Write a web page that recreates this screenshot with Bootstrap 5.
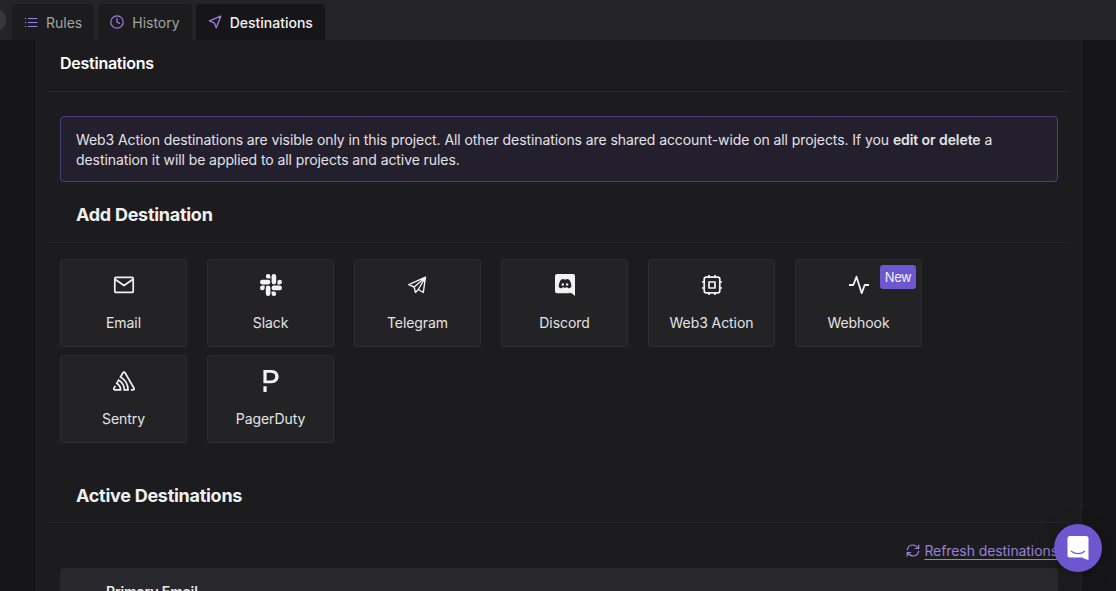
<!DOCTYPE html>
<html lang="en" data-bs-theme="dark">
<head>
<meta charset="utf-8">
<meta name="viewport" content="width=device-width, initial-scale=1">
<title>Destinations</title>
<link href="https://cdn.jsdelivr.net/npm/bootstrap@5.3.0/dist/css/bootstrap.min.css" rel="stylesheet">
<style>
body{font-family:Inter,sans-serif;font-size:14px;line-height:20px;letter-spacing:-.08px;background:#161618;color:#e9e9ec;height:591px;overflow:hidden}
svg{display:block;flex:none}
.topbar{height:40px;background:#242426;padding:4px 0 0 12px;gap:4px;position:relative;overflow:hidden}
.scroll-knob{position:absolute;left:-18px;top:8px;width:24px;height:24px;border-radius:50%;background:#38383b}
.topbar .nav-link{height:36px;padding:0 12px;border-radius:4px 4px 0 0;background:#1c1c1e;color:#a3a3a6;display:flex;align-items:center;line-height:20px;padding-top:1px;letter-spacing:0}
.topbar .nav-link.active{background:#161618;color:#f1f1f3;font-weight:500}
.topbar svg{width:14px;height:14px;color:#9580dc;margin-right:8px;margin-top:-2px}
.panel{width:1046px;height:551px;margin-left:36px;border:solid #262629;border-width:0 1px;background:#1c1c1e;padding:0 11px;overflow:hidden}
.panel-title{height:52px;padding:13px 12px 0;border-bottom:1px solid #28282b;font-size:16px;line-height:20px;font-weight:600;letter-spacing:-.25px}
.notice{margin:24px 12px 0;height:66px;padding:13px 15px 0;border:1px solid #4b3f7f;border-radius:4px;background:#231f2c;color:#e3e2e8}
.section-title{font-size:18px;line-height:24px;font-weight:700;letter-spacing:-.27px;padding-left:28px;border-bottom:1px solid #252528;color:#f0f0f1}
.add-title{height:61px;padding-top:21px}
.active-title{height:60px;padding-top:21px;margin-top:20px}
.tiles{display:grid;grid-template-columns:repeat(6,127px);column-gap:20px;row-gap:8px;padding:16px 12px 0}
.tile{height:88px;border:1px solid #2d2d30;border-radius:3px;background:#232325;color:#e4e4e6;padding:14px 0 0;position:relative;font-size:14px;line-height:20px}
.tile svg{width:22px;height:22px;margin:0 auto 17px;color:#f2f2f3}
.new-tag{position:absolute;right:5px;top:5px;width:36px;height:24px;border-radius:3px;background:#6e56cf;color:#f3f0ff;font-size:13px;line-height:25px;font-weight:400;letter-spacing:-.5px;padding:0}
.refresh{height:45px;padding:18px 12px 0;color:#9580dc}
.refresh a{color:#9580dc;text-decoration:underline;text-underline-offset:3px}
.dest-row{margin:0 12px;height:60px;border-radius:4px 4px 0 0;background:#29282d;padding:14px 46px;font-weight:600;letter-spacing:-.1px}
.chat-btn{position:absolute;left:1054px;top:524px;width:48px;height:48px;border-radius:50%;background:#6e56cf;box-shadow:0 1px 6px #0002,0 2px 20px #0002;padding:0}
</style>
</head>
<body>
<nav class="nav topbar flex-nowrap">
  <span class="scroll-knob"></span>
  <a class="nav-link" href="#"><svg viewBox="0 0 14 14" fill="none" stroke="currentColor" stroke-width="1.1"><path d="M4 3.500h9.500M4 7.500h9.500M4 11.500h9.500M.8 3.500h1.400M.8 7.500h1.400M.8 11.500h1.400"/></svg>Rules</a>
  <a class="nav-link" href="#"><svg viewBox="0 0 14 14" fill="none" stroke="currentColor" stroke-width="1.25" stroke-linecap="round" stroke-linejoin="round"><circle cx="7" cy="7" r="6.2"/><path d="M7 3.4V7l2.500 1.400"/></svg>History</a>
  <a class="nav-link active" href="#"><svg viewBox="0 0 14 14" fill="none" stroke="currentColor" stroke-width="1.35" stroke-linejoin="round"><path d="M12.800 1.200 1.400 5.800l4.800 2 2 4.900z"/></svg>Destinations</a>
</nav>
<main class="panel">
  <h1 class="panel-title m-0">Destinations</h1>
  <div class="notice">Web3 Action destinations are visible only in this project. All other destinations are shared account-wide on all projects. If you <b class="fw-semibold">edit or delete</b> a destination it will be applied to all projects and active rules.</div>
  <h2 class="section-title add-title mb-0">Add Destination</h2>
  <div class="tiles text-center">
    <div class="tile"><svg viewBox="0 0 22 22" fill="none" stroke="currentColor" stroke-width="1.7" stroke-linejoin="round"><rect x="1.8" y="3.4" width="18.4" height="15" rx="1"/><path d="m2 5.2 9 6.300 9-6.300"/></svg>Email</div>
    <div class="tile"><svg viewBox="0 0 24 24" fill="currentColor"><path d="M5.042 15.165a2.528 2.528 0 0 1-2.52 2.523A2.528 2.528 0 0 1 0 15.165a2.527 2.527 0 0 1 2.522-2.52h2.52zM6.313 15.165a2.527 2.527 0 0 1 2.521-2.52 2.527 2.527 0 0 1 2.521 2.52v6.313A2.528 2.528 0 0 1 8.834 24a2.528 2.528 0 0 1-2.521-2.522zM8.834 5.042a2.528 2.528 0 0 1-2.521-2.52A2.528 2.528 0 0 1 8.834 0a2.528 2.528 0 0 1 2.521 2.522v2.52zM8.834 6.313a2.528 2.528 0 0 1 2.521 2.521 2.528 2.528 0 0 1-2.521 2.521H2.522A2.528 2.528 0 0 1 0 8.834a2.528 2.528 0 0 1 2.522-2.521zM18.956 8.834a2.528 2.528 0 0 1 2.522-2.521A2.528 2.528 0 0 1 24 8.834a2.528 2.528 0 0 1-2.522 2.521h-2.522zM17.688 8.834a2.528 2.528 0 0 1-2.523 2.521 2.527 2.527 0 0 1-2.52-2.521V2.522A2.527 2.527 0 0 1 15.165 0a2.528 2.528 0 0 1 2.523 2.522zM15.165 18.956a2.528 2.528 0 0 1 2.523 2.522A2.528 2.528 0 0 1 15.165 24a2.527 2.527 0 0 1-2.52-2.522v-2.522zM15.165 17.688a2.527 2.527 0 0 1-2.52-2.523 2.526 2.526 0 0 1 2.52-2.52h6.313A2.527 2.527 0 0 1 24 15.165a2.528 2.528 0 0 1-2.522 2.523z"/></svg>Slack</div>
    <div class="tile"><svg viewBox="0 0 22 22" fill="none" stroke="currentColor" stroke-width="1.4" stroke-linejoin="round"><path d="M18.500 3.200 1.800 10.600l5.400 2.400 1.200 5.400 2.900-2.900 5 3zM18.500 3.200 7.200 13M18.500 3.200l-7.200 12.300"/></svg>Telegram</div>
    <div class="tile"><svg viewBox="0 0 22 22"><path fill="currentColor" d="M3 0h15.600A2.200 2.200 0 0 1 21 2.300V22l-3.200-2.800H3a2 2 0 0 1-2-2V2a2 2 0 0 1 2-2z"/><path fill="#232325" d="m15.100 19.800-.6-1.600 2.500 2zM6.700 6c1.200-.8 2.400-1 2.800-.9l.3.5q1.300-.2 2.500 0l.3-.5c.6-.1 1.900.2 2.900.9 1.500 2.400 2 5 1.800 7-1 1-2.300 1.300-3.100 1.300l-.8-1.100q-2.400.9-4.800 0l-.8 1.100c-1 0-2.300-.4-3-1.300-.2-2.200.5-5 1.900-7z"/><ellipse cx="8.800" cy="10.500" rx="1.200" ry="1.300" fill="currentColor"/><ellipse cx="13.100" cy="10.500" rx="1.200" ry="1.300" fill="currentColor"/></svg>Discord</div>
    <div class="tile"><svg viewBox="0 0 22 22" fill="none" stroke="currentColor" stroke-width="1.7" stroke-linejoin="round"><rect x="3.200" y="3.200" width="15.600" height="15.600" rx="2"/><rect x="8" y="8" width="6" height="6"/><path d="M8 1v2.200M14 1v2.200M8 18.800V21M14 18.800V21M1 8h2.200M1 14h2.200M18.800 8H21M18.800 14H21"/></svg>Web3 Action</div>
    <div class="tile"><svg viewBox="0 0 22 22" fill="none" stroke="currentColor" stroke-width="1.8" stroke-linejoin="round"><path d="M1 11h4.300L8.500 2.800l5.200 16.400 3-8.200H21"/></svg>Webhook<span class="new-tag badge">New</span></div>
    <div class="tile"><svg viewBox="0 0 24 24" fill="currentColor"><path d="M13.91 2.505c-.873-1.448-2.972-1.448-3.844 0L6.904 7.92a15.478 15.478 0 0 1 8.53 12.811h-2.221A13.301 13.301 0 0 0 5.784 9.814l-2.926 5.06a7.65 7.65 0 0 1 4.435 5.848H2.194a.365.365 0 0 1-.298-.534l1.413-2.402a5.16 5.16 0 0 0-1.614-.913L.296 19.275a2.182 2.182 0 0 0 .812 2.999 2.24 2.24 0 0 0 1.086.288h6.983a9.322 9.322 0 0 0-3.845-8.318l1.11-1.922a11.47 11.47 0 0 1 4.95 10.24h5.915a17.242 17.242 0 0 0-7.885-15.28l2.244-3.845a.37.37 0 0 1 .504-.13c.255.14 9.75 16.708 9.928 16.9a.365.365 0 0 1-.327.543h-2.287c.029.612.029 1.223 0 1.831h2.297a2.206 2.206 0 0 0 1.922-3.31z"/></svg>Sentry</div>
    <div class="tile"><svg viewBox="0 0 24 24" fill="currentColor"><path d="M16.965 1.18C15.085.164 13.769 0 10.683 0H3.73v14.55h6.926c2.743 0 4.8-.164 6.61-1.37 1.975-1.303 3.004-3.484 3.004-6.007 0-2.716-1.262-4.896-3.305-5.994zm-5.5 10.326h-4.21V3.113l3.977-.027c3.62-.028 5.43 1.234 5.43 4.128 0 3.113-2.248 4.292-5.197 4.292zM3.73 17.61h3.525V24H3.73Z"/></svg>PagerDuty</div>
  </div>
  <h2 class="section-title active-title mb-0">Active Destinations</h2>
  <div class="refresh d-flex justify-content-end"><svg class="me-1" width="14" height="13" style="margin-top:3px" viewBox="0 0 14 13" fill="none" stroke="currentColor" stroke-width="1.2" stroke-linecap="round" stroke-linejoin="round"><path d="M12.800 1v3.500H9.300M1.200 12V8.500h3.500M1.300 5.800C1.900 3 4.200 1 6.800 1c2.200 0 4 1.100 6 3.500M12.700 7.200C12.100 10 9.800 12 7.200 12c-2.200 0-4-1.100-6-3.500"/></svg><a href="#">Refresh destinations</a></div>
  <div class="dest-row">Primary Email</div>
</main>
<button class="btn chat-btn" aria-label="Open chat"><svg class="mx-auto" width="22" height="26" viewBox="0 0 22 26"><path fill="#fff" d="M3 1h16a2.500 2.500 0 0 1 2.500 2.500V25c-2.500-.5-4.600-1.400-6-2.500H3A2.400 2.400 0 0 1 .5 20V3.500A2.500 2.500 0 0 1 3 1z"/><path d="M4.300 16.300c4 3.200 9.400 3.200 13.400 0" fill="none" stroke="#6e56cf" stroke-width="1.200" stroke-linecap="round"/></svg></button>
</body>
</html>
